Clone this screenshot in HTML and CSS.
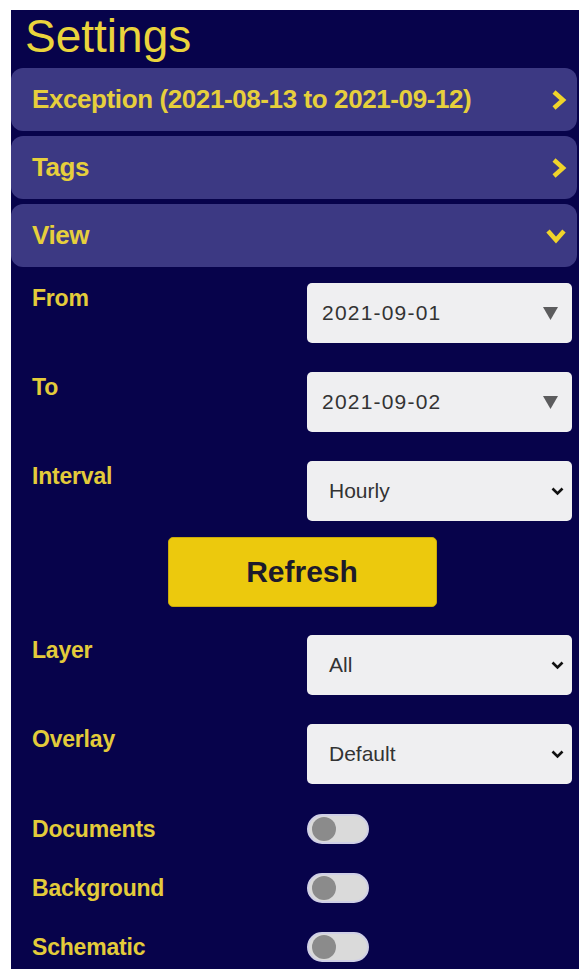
FILE: index.html
```html
<!DOCTYPE html>
<html lang="en">
<head>
<meta charset="utf-8">
<title>Settings</title>
<link rel="stylesheet" href="styles.css">
</head>
<body>
<aside class="panel">
  <h1 class="title">Settings</h1>

  <div class="accordion">
    <div class="acc-head">
      <span class="acc-title">Exception (2021-08-13 to 2021-09-12)</span>
      <svg class="chev chev-right" viewBox="0 0 16 22" width="16" height="22"><polyline points="3,3 12,11 3,19"/></svg>
    </div>
    <div class="acc-head">
      <span class="acc-title">Tags</span>
      <svg class="chev chev-right" viewBox="0 0 16 22" width="16" height="22"><polyline points="3,3 12,11 3,19"/></svg>
    </div>
    <div class="acc-head">
      <span class="acc-title">View</span>
      <svg class="chev chev-down" viewBox="0 0 22 16" width="22" height="16"><polyline points="3,3 11,12 19,3"/></svg>
    </div>
  </div>

  <div class="view-body">
    <div class="row">
      <span class="lbl">From</span>
      <div class="field date">
        <span class="val">2021-09-01</span>
        <svg class="tri" viewBox="0 0 15 13" width="15" height="13"><polygon points="0,0 15,0 7.5,13"/></svg>
      </div>
    </div>
    <div class="row">
      <span class="lbl">To</span>
      <div class="field date">
        <span class="val">2021-09-02</span>
        <svg class="tri" viewBox="0 0 15 13" width="15" height="13"><polygon points="0,0 15,0 7.5,13"/></svg>
      </div>
    </div>
    <div class="row">
      <span class="lbl">Interval</span>
      <div class="field select">
        <span class="val">Hourly</span>
        <svg class="caret" viewBox="0 0 13 9" width="13" height="9"><polyline points="1.5,1.5 6.5,6.5 11.5,1.5"/></svg>
      </div>
    </div>

    <div class="actions">
      <button class="refresh" type="button">Refresh</button>
    </div>

    <div class="row">
      <span class="lbl">Layer</span>
      <div class="field select">
        <span class="val">All</span>
        <svg class="caret" viewBox="0 0 13 9" width="13" height="9"><polyline points="1.5,1.5 6.5,6.5 11.5,1.5"/></svg>
      </div>
    </div>
    <div class="row">
      <span class="lbl">Overlay</span>
      <div class="field select">
        <span class="val">Default</span>
        <svg class="caret" viewBox="0 0 13 9" width="13" height="9"><polyline points="1.5,1.5 6.5,6.5 11.5,1.5"/></svg>
      </div>
    </div>

    <div class="toggles">
      <div class="toggle-row">
        <span class="lbl">Documents</span>
        <span class="switch"><span class="knob"></span></span>
      </div>
      <div class="toggle-row">
        <span class="lbl">Background</span>
        <span class="switch"><span class="knob"></span></span>
      </div>
      <div class="toggle-row">
        <span class="lbl">Schematic</span>
        <span class="switch"><span class="knob"></span></span>
      </div>
    </div>
  </div>
</aside>
</body>
</html>
```

FILE: styles.css
```css
html, body {
  margin: 0;
  padding: 0;
  background: #ffffff;
  height: 100%;
  overflow: hidden;
}

body {
  font-family: "Liberation Sans", Arial, sans-serif;
}

.panel {
  margin: 10px 0 0 11px;
  height: calc(100vh - 10px);
  background: #07034b;
  color: #e8d03b;
  box-sizing: border-box;
  overflow: hidden;
}

.title {
  margin: 0 0 6px;
  padding-left: 14px;
  font-size: 46px;
  font-weight: 400;
  line-height: 52px;
  color: #ead43c;
}

/* collapsible section headers */
.accordion {
  display: flex;
  flex-direction: column;
  gap: 5px;
  margin-right: 2px;
}

.acc-head {
  height: 63px;
  display: flex;
  align-items: center;
  justify-content: space-between;
  padding: 0 10px 0 21px;
  background: #3c3983;
  border-radius: 12px;
}

.acc-title {
  font-size: 26px;
  font-weight: 700;
  letter-spacing: -0.4px;
  color: #e6cf3c;
}

.chev {
  fill: none;
  stroke: #f0d42a;
  stroke-width: 4.5;
  stroke-linejoin: miter;
}

/* view form */
.view-body {
  display: flex;
  flex-direction: column;
  gap: 29px;
  padding: 16px 7px 0 21px;
}

.row {
  display: grid;
  grid-template-columns: 275px 265px;
  align-items: start;
}

.lbl {
  padding-top: 2px;
  font-size: 23px;
  font-weight: 700;
  letter-spacing: -0.2px;
  color: #e3cb3a;
}

.field {
  height: 60px;
  display: flex;
  align-items: center;
  justify-content: space-between;
  box-sizing: border-box;
  background: #efeff1;
  border-radius: 5px;
  color: #333333;
}

.field.date {
  padding: 0 14px 0 15px;
}

.field.date .val {
  font-size: 21px;
  letter-spacing: 1.2px;
}

.field.select {
  padding: 0 8px 0 22px;
}

.field.select .val {
  font-size: 21px;
}

.tri {
  fill: #5c5c5e;
}

.caret {
  fill: none;
  stroke: #111111;
  stroke-width: 2.6;
}

.actions {
  display: flex;
  justify-content: center;
  margin: -13px 0 -1px;
}

.refresh {
  width: 269px;
  height: 70px;
  background: #ecc90d;
  border: 1px solid #c9a90a;
  border-radius: 5px;
  font-family: "Liberation Sans", Arial, sans-serif;
  font-size: 30px;
  font-weight: 700;
  color: #1d1a2c;
  cursor: pointer;
}

/* on/off switches */
.toggles {
  display: flex;
  flex-direction: column;
  gap: 29px;
  margin-top: 1px;
}

.toggle-row {
  display: grid;
  grid-template-columns: 275px auto;
  align-items: center;
  height: 30px;
}

.toggle-row .lbl {
  padding-top: 0;
}

.switch {
  width: 62px;
  height: 30px;
  box-sizing: border-box;
  display: flex;
  align-items: center;
  padding-left: 3px;
  background: #dadada;
  border: 2px solid #cfcfe6;
  border-radius: 15px;
}

.knob {
  width: 24px;
  height: 24px;
  border-radius: 50%;
  background: #8b8b8b;
}
```
